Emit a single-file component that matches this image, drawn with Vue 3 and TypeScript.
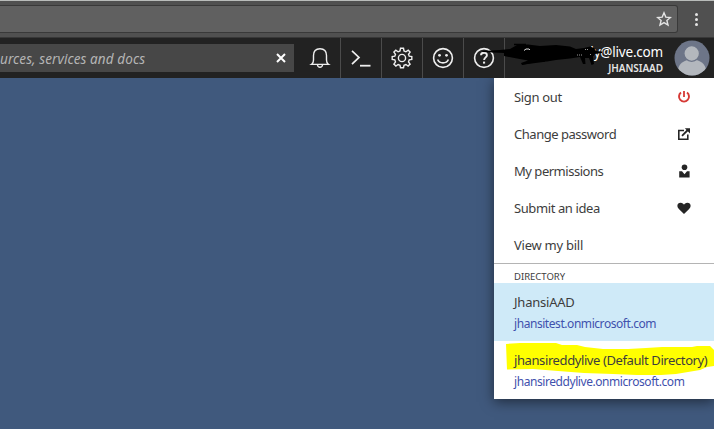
<script setup lang="ts">
interface Action { label: string; icon: string; spacing: string }
interface Directory { name: string; domain: string; current: boolean; spacing: string; domainSpacing: string }

const tools: string[] = ['bell', 'shell', 'gear', 'smile', 'help']

const actions: Action[] = [
  { label: 'Sign out', icon: 'power', spacing: '-0.33px' },
  { label: 'Change password', icon: 'external', spacing: '-0.47px' },
  { label: 'My permissions', icon: 'person', spacing: '-0.48px' },
  { label: 'Submit an idea', icon: 'heart', spacing: '-0.4px' },
  { label: 'View my bill', icon: '', spacing: '-0.25px' },
]

const directories: Directory[] = [
  { name: 'JhansiAAD', domain: 'jhansitest.onmicrosoft.com', current: true, spacing: '-0.22px', domainSpacing: '-0.44px' },
  { name: 'jhansireddylive (Default Directory)', domain: 'jhansireddylive.onmicrosoft.com', current: false, spacing: '-0.4px', domainSpacing: '-0.43px' },
]
</script>

<template>
  <div class="page">
    <div class="browser">
      <div class="address">
        <svg class="star" width="16" height="16" viewBox="0 0 16 16"><path d="M8 1.8 9.8 6.1 14.4 6.5 10.9 9.5 12 14 8 11.6 4 14 5.1 9.5 1.6 6.5 6.2 6.1Z" fill="none" stroke="#e4e4e4" stroke-width="1.4" /></svg>
      </div>
      <div class="dots"><i /><i /><i /></div>
    </div>

    <header class="topbar">
      <div class="search">
        <span>urces, services and docs</span>
        <svg width="10" height="10" viewBox="0 0 10 10"><path d="M1 1 9 9M9 1 1 9" stroke="#fff" stroke-width="2" /></svg>
      </div>
      <div v-for="tool in tools" :key="tool" class="tool">
        <svg width="22" height="22" viewBox="0 0 22 22" fill="none" stroke="#eee" stroke-width="1.4">
          <template v-if="tool === 'bell'">
            <path d="M2.6 17.4C4.5 16.2 4.5 14.5 4.5 13V8.5C4.5 4 7 1.7 11 1.7S17.5 4 17.5 8.5V13C17.5 14.5 17.5 16.2 19.4 17.4Z" />
            <path d="M8.5 18c.2 1.5 1.1 2.2 2.5 2.2s2.3-.7 2.5-2.2" />
          </template>
          <template v-else-if="tool === 'shell'">
            <path d="M2 3.8 9 10.4 2 17.2" stroke-width="1.7" /><path d="M10 18.7H20.5" stroke-width="1.8" />
          </template>
          <template v-else-if="tool === 'gear'">
            <path d="M9.5 1.3H12.5L13 4 14.9 4.8 17.2 3.2 19.1 5.1 17.5 7.3 18.2 9.2 20.8 9.6V12.4L18.2 12.9 17.5 14.8 19.1 17.1 17.1 19 14.9 17.5 13 18.3 12.5 20.8H9.5L9 18.3 7.1 17.5 4.9 19 2.9 17.1 4.5 14.8 3.8 12.9 1.2 12.4V9.6L3.8 9.2 4.5 7.3 2.9 5.1 4.8 3.2 7.1 4.8 9 4Z" />
            <circle cx="11" cy="11" r="3.6" />
          </template>
          <template v-else-if="tool === 'smile'">
            <circle cx="11" cy="11" r="9.4" stroke-width="1.6" />
            <circle cx="7.5" cy="8.3" r="1.4" fill="#eee" stroke="none" /><circle cx="14.5" cy="8.3" r="1.4" fill="#eee" stroke="none" />
            <path d="M5.6 12.5C7.5 17 14.5 17 16.4 12.5" stroke-width="1.6" />
          </template>
          <template v-else>
            <circle cx="11" cy="11" r="9.4" stroke-width="1.6" />
            <path d="M8 8.2C8.1 6.6 9.4 5.8 11 5.8S13.9 6.7 13.9 8.2C13.9 10.3 11.1 10.5 11.1 13" stroke-width="1.9" />
            <path d="M10 14.6H12.1V16.6H10Z" fill="#eee" stroke="none" />
          </template>
        </svg>
      </div>
      <div class="account">
        <div class="identity">
          <div class="email">dy@live.com</div>
          <div class="tenant">JHANSIAAD</div>
        </div>
        <svg class="avatar" width="36" height="36" viewBox="0 0 36 36">
          <clipPath id="face"><circle cx="18" cy="18" r="17.5" /></clipPath>
          <g clip-path="url(#face)">
            <rect width="36" height="36" fill="#6d7588" />
            <ellipse cx="18" cy="30" rx="13.8" ry="10.5" fill="#b3b7bd" />
            <circle cx="17.7" cy="13.5" r="7.8" fill="#b3b7bd" stroke="#6d7588" stroke-width="1.3" />
          </g>
        </svg>
      </div>
      <svg class="scribble" width="130" height="32" viewBox="476 40 130 32">
        <path d="M482 51 500 50 510 49 517 45 528 44.5 540 46 556 45 570 46.5 576 49 584 48 590 46.5 594 48 596 51 602 51.5 602 53 595 54 593 57 594 64 591.5 65 589 58 585 58 585.5 64 583 64 580 57 570 58.5 556 60 547 61.5 536 62 522 65 521 63 528 60.5 517 58.5 504 56 504 53 483 52Z" fill="#000" />
        <path d="M514 44.5 526 44.5 M512 56 535 55 M522 64 545 61" stroke="#000" stroke-width="1.5" />
        <path d="M524 50.5 526 49 529 49 530 50" stroke="#ddd" fill="none" />
        <path d="M577 55H583M585 49.5H588M590 54.5H592" stroke="#999" stroke-dasharray="1 1" />
      </svg>
    </header>

    <main>
      <section class="menu">
        <div class="actions">
          <div v-for="a in actions" :key="a.label" class="action">
            <span :style="{ letterSpacing: a.spacing }">{{ a.label }}</span>
            <svg v-if="a.icon" width="16" height="16" viewBox="0 0 16 16">
              <template v-if="a.icon === 'power'">
                <path d="M5 3.6A5 5 0 1 0 11 3.6" fill="none" stroke="#d63a36" stroke-width="1.9" /><path d="M8 2V8" stroke="#d63a36" stroke-width="1.8" />
              </template>
              <template v-else-if="a.icon === 'external'">
                <path d="M8 4.5H2.8V13.2H11.8V8.5" fill="none" stroke="#252525" stroke-width="1.6" /><path d="M6 9.8 12.3 3.5" stroke="#252525" stroke-width="1.8" /><path d="M8.8 2.2H14V7.4Z" fill="#252525" />
              </template>
              <template v-else-if="a.icon === 'person'">
                <circle cx="8.5" cy="4.2" r="2.8" fill="#252525" /><path d="M3.2 8.2H6L8.5 11.2 11 8.2H13.6V14.6H3.2Z" fill="#252525" />
              </template>
              <path v-else d="M8 13.9 3.1 9.3C-.1 6.1 1.6 2.7 4.6 2.7 6.5 2.7 7.5 3.8 8 4.8 8.5 3.8 9.5 2.7 11.4 2.7 14.4 2.7 16.1 6.1 12.9 9.3Z" fill="#252525" />
            </svg>
          </div>
        </div>
        <div class="heading">DIRECTORY</div>
        <div v-for="d in directories" :key="d.domain" class="directory" :class="{ current: d.current }">
          <svg v-if="!d.current" class="marker" width="210" height="36" viewBox="504 342 210 36">
            <path d="M506 344 520 343H556L562 345H577L585 347 603 349H628L646 348 662 347H692L697 346 710 346 714 350V366L707 367 700 370 676 374 661 375H637L613 374 584 373 558 371 533 369 507 369.5Z" fill="#ff0" />
          </svg>
          <div class="name" :style="{ letterSpacing: d.spacing }">{{ d.name }}</div>
          <div class="domain" :style="{ letterSpacing: d.domainSpacing }">{{ d.domain }}</div>
        </div>
      </section>
    </main>
  </div>
</template>

<style>
body { margin: 0; }
</style>

<style scoped>
.page { width: 714px; height: 429px; overflow: hidden; display: flex; flex-direction: column; background: #40597d; font-family: "Noto Sans", "Open Sans", sans-serif; color: #3d3d3d; }
.browser { height: 37px; box-sizing: border-box; border-top: 1px solid #b9bcba; background: #505050; display: flex; padding-top: 4px; flex: none; }
.address { width: 678px; height: 28px; box-sizing: border-box; background: #606060; border: 1px solid #393939; border-left: 0; border-radius: 0 3px 3px 0; display: flex; justify-content: flex-end; align-items: center; padding-right: 5px; }
.dots { display: flex; flex-direction: column; gap: 2px; margin: 8px 0 0 17px; }
.dots i { width: 3px; height: 3px; border-radius: 50%; background: #e4e4e4; }
.topbar { height: 41px; box-sizing: border-box; border-top: 1px solid #383838; background: #222; display: flex; position: relative; flex: none; }
.search { width: 294px; height: 28px; margin: 6px 5px 0 0; box-sizing: border-box; padding-right: 8px; background: #474747; color: #b5b5b5; display: flex; align-items: center; justify-content: space-between; font-size: 13.5px; font-style: italic; white-space: nowrap; }
.search span { letter-spacing: 0.1px; padding-top: 2px; }
.tool { width: 41px; box-sizing: border-box; border-right: 1px solid #4b4b4b; display: flex; align-items: center; justify-content: center; }
.tool:nth-child(2) { width: 42px; }
.account { flex: 1; display: flex; justify-content: flex-end; padding: 2px 4px 0 0; gap: 11px; }
.identity { text-align: right; color: #fff; white-space: nowrap; }
.email { font-size: 13.5px; line-height: 18px; padding-top: 3px; letter-spacing: -0.2px; }
.tenant { font-size: 10px; line-height: 14px; font-weight: 600; letter-spacing: -0.05px; color: #e5e5e5; }
.scribble { position: absolute; left: 476px; top: 2px; }
main { flex: 1; display: flex; justify-content: flex-end; align-items: flex-start; }
.menu { width: 220px; background: #fff; box-shadow: 0 3px 12px rgba(0, 0, 0, .5); }
.actions { border-bottom: 1px solid #b4b4b4; }
.action { height: 37px; display: flex; align-items: center; justify-content: space-between; padding: 0 22px 0 20px; font-size: 13px; }
.heading { height: 19px; line-height: 25px; padding-left: 20px; font-size: 9.5px; letter-spacing: 0; }
.directory { height: 58px; box-sizing: border-box; padding: 9px 0 0 20px; position: relative; white-space: nowrap; }
.current { background: #cfeaf8; }
.name { position: relative; font-size: 13px; line-height: 21px; }
.domain { position: relative; font-size: 12px; line-height: 22px; color: #3f51ad; }
.marker { position: absolute; left: 10px; top: 1px; }
</style>
